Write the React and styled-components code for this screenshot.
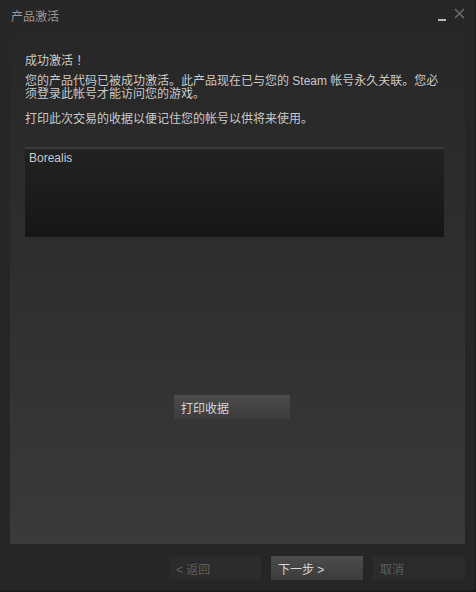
import React from 'react'
import styled, { createGlobalStyle } from 'styled-components'

const GlobalStyle = createGlobalStyle`
    html, body {
        margin: 0;
        padding: 0;
        background: #262626;
    }
    body {
        font-family: 'Liberation Sans', 'Noto Sans CJK SC', sans-serif;
        font-size: 12px;
    }
`

const App = () => {
    return (
        <>
            <GlobalStyle />
            <Window>
                <TitleBar>
                    <Title>产品激活</Title>
                    <Controls>
                        <Minimize />
                        <Close>
                            <svg width="11" height="11" viewBox="0 0 11 11">
                                <path d="M1 1 L10 10 M10 1 L1 10" stroke="#6a6a6a" strokeWidth="1.6" />
                            </svg>
                        </Close>
                    </Controls>
                </TitleBar>
                <Panel>
                    <Heading>成功激活 ！</Heading>
                    <Text>您的产品代码已被成功激活。此产品现在已与您的 Steam 帐号永久关联。您必须登录此帐号才能访问您的游戏。</Text>
                    <Text>打印此次交易的收据以便记住您的帐号以供将来使用。</Text>
                    <Receipt>Borealis</Receipt>
                    <PrintRow>
                        <Button $primary $width={116}>打印收据</Button>
                    </PrintRow>
                </Panel>
                <Footer>
                    <Button $disabled>&lt; 返回</Button>
                    <Button $primary>下一步 &gt;</Button>
                    <Button $disabled>取消</Button>
                </Footer>
            </Window>
        </>
    )
}

export default App

const Window = styled.div`
    width: 476px;
    height: 592px;
    box-sizing: border-box;
    background: #262626;
    border-right: 1px solid #1c1c1c;
    border-bottom: 2px solid #1c1c1c;
    display: flex;
    flex-direction: column;
`
const TitleBar = styled.div`
    height: 30px;
    display: flex;
    align-items: flex-start;
    justify-content: space-between;
    padding: 0 10px 0 11px;
`
const Title = styled.div`
    color: #9a9896;
    margin-top: 9px;
    line-height: 16px;
`
const Controls = styled.div`
    display: flex;
    align-items: flex-start;
    gap: 8px;
    margin-top: 8px;
`
const Minimize = styled.div`
    width: 8px;
    height: 2px;
    background: #b8b8b8;
    margin-top: 11px;
`
const Close = styled.div`
    width: 11px;
    height: 11px;
    svg {
        display: block;
    }
`
const Panel = styled.div`
    margin: 0 10px;
    height: 514px;
    box-sizing: border-box;
    padding: 23px 21px 0 15px;
    background: linear-gradient(to bottom, #272727 0%, #2e2e2e 45%, #3a3a3a 100%);
    display: flex;
    flex-direction: column;
`
const Heading = styled.div`
    color: #c9c9c9;
    line-height: 16px;
    margin-bottom: 6px;
`
const Text = styled.p`
    margin: 0 0 12px;
    color: #c9c9c9;
    line-height: 13px;
`
const Receipt = styled.div`
    margin-top: 9px;
    height: 91px;
    box-sizing: border-box;
    padding: 2px 4px;
    border-top: 2px solid #3a3a3a;
    border-bottom: 1px solid #2c2c2c;
    background: linear-gradient(to bottom, #222222, #161616);
    color: #c2cad0;
    line-height: 14px;
`
const PrintRow = styled.div`
    margin-top: 157px;
    padding-left: 149px;
`
const Button = styled.div`
    width: ${p => p.$width || 92}px;
    height: 24px;
    box-sizing: border-box;
    padding-left: 7px;
    display: flex;
    align-items: center;
    color: ${p => p.$disabled ? '#5e5e5e' : '#d6d6d6'};
    background: ${p => p.$disabled
        ? '#2b2b2b'
        : 'linear-gradient(to bottom, #4c4c4c, #3c3c3c)'};
    cursor: ${p => p.$disabled ? 'default' : 'pointer'};
`
const Footer = styled.div`
    display: flex;
    justify-content: flex-end;
    gap: 10px;
    padding: 12px 10px 0 0;
`
